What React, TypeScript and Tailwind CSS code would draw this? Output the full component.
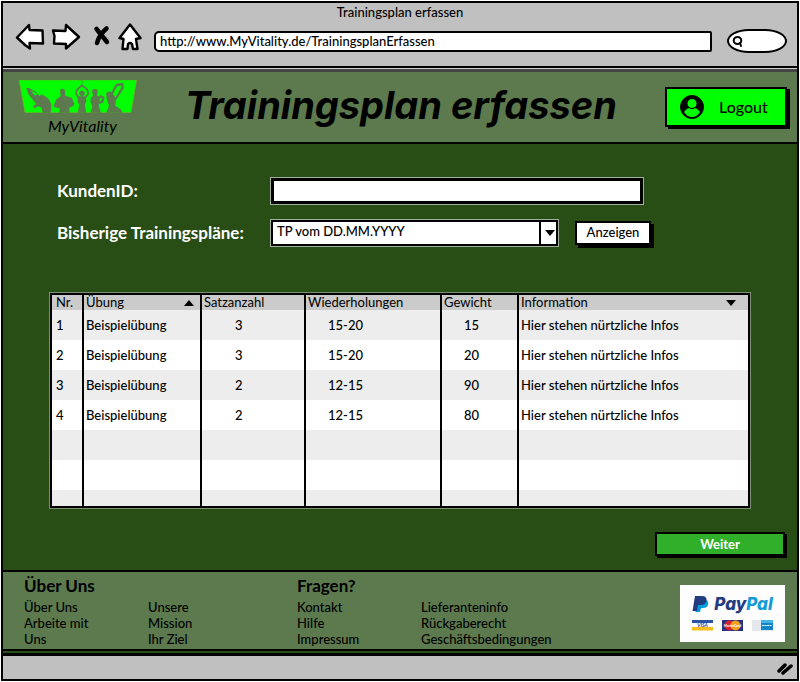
import React from "react";

const exercises = [
  { nr: 1, name: "Beispielübung", sets: "3", reps: "15-20", weight: "15", info: "Hier stehen nürtzliche Infos" },
  { nr: 2, name: "Beispielübung", sets: "3", reps: "15-20", weight: "20", info: "Hier stehen nürtzliche Infos" },
  { nr: 3, name: "Beispielübung", sets: "2", reps: "12-15", weight: "90", info: "Hier stehen nürtzliche Infos" },
  { nr: 4, name: "Beispielübung", sets: "2", reps: "12-15", weight: "80", info: "Hier stehen nürtzliche Infos" },
];

function BrowserBar() {
  return (
    <div className="border-b-2 border-black bg-[#c0c0c0] pb-[13px]">
      <p className="text-center text-[13px] leading-[18px]">Trainingsplan erfassen</p>
      <div className="flex items-center pr-[10px] pl-3">
        <div className="flex shrink-0 items-center">
          <button type="button" aria-label="Zurück" className="w-[30px]">
            <svg viewBox="0 0 30 28" className="h-7 w-[30px]" fill="#fff" stroke="#000" strokeWidth="2.4" strokeLinejoin="round">
              <path d="M2 14.500 L14 2 L14.500 7 L27.500 7.500 L28 20.500 L14.500 20 L15 25.500 L10 22 Z" />
            </svg>
          </button>
          <button type="button" aria-label="Vorwärts" className="ml-[6px] w-[30px]">
            <svg viewBox="0 0 30 28" className="h-7 w-[30px]" fill="#fff" stroke="#000" strokeWidth="2.4" strokeLinejoin="round">
              <path d="M2 7.500 L14.500 8 L15 2 L28 14 L15 25.500 L15 21 L3 20.500 L3.500 13 Z" />
            </svg>
          </button>
          <button type="button" aria-label="Abbrechen" className="ml-[11px] w-5">
            <svg viewBox="0 0 20 28" className="h-7 w-5" fill="none" stroke="#000" strokeWidth="4.500" strokeLinecap="round">
              <path d="M4.500 6 L15 19 M14.500 5.500 Q7 12 5 20" />
            </svg>
          </button>
          <button type="button" aria-label="Startseite" className="ml-[6px] w-6">
            <svg viewBox="0 0 24 28" className="h-7 w-6" fill="#fff" stroke="#000" strokeWidth="2.400" strokeLinejoin="round">
              <path d="M1.500 15 L12 1.500 L22.500 15 L18 16 L19.500 26 L15 26 L14 21 Q12 19 10 21 L9.500 26 L4.500 26 L5.500 16 Z" />
            </svg>
          </button>
        </div>
        <input
          aria-label="Adresse"
          defaultValue="http://www.MyVitality.de/TrainingsplanErfassen"
          className="mt-2 ml-3 h-[21px] min-w-0 flex-1 rounded-l-[5px] rounded-r-[2px] border-2 border-black bg-white pl-1 text-[13px] leading-4"
        />
        <label className="mt-2 ml-[15px] flex h-6 w-[60px] shrink-0 items-center rounded-[40%/55%] border-2 border-black bg-white pl-[3px]">
          <svg viewBox="0 0 12 12" className="size-3 shrink-0" fill="none" stroke="#000" strokeWidth="2" strokeLinecap="round">
            <ellipse cx="5.500" cy="5.500" rx="3.800" ry="3.500" />
            <path d="M8 8 L9 11" />
          </svg>
          <input aria-label="Suchen" className="w-8 bg-transparent text-xs outline-none" />
        </label>
      </div>
    </div>
  );
}

function Logo() {
  return (
    <div className="flex w-[118px] flex-col">
      <svg viewBox="14 19 354 99" className="h-[33px] w-[118px]" aria-hidden="true">
        <path d="M14 19 H367 L350 117 H32 Z" fill="#00ff00" stroke="#7da52f" strokeWidth="2" />
        <g fill="#5c7a4d">
          <path d="M36 43 L45 43 L66 56 L76 68 L81 62 L90 66 L104 77 L111 92 L110 117 H85 L82 103 L72 98 L60 104 L56 97 L66 91 L60 84 L42 62 Z" />
          <path d="M137 50 Q140 43 149 46 Q154 50 152 61 L153 66 L172 72 L180 90 L178 96 L164 103 L166 117 H134 L137 104 L120 101 L118 96 L126 77 L139 68 Z" />
          <circle cx="203" cy="59" r="8" />
          <path d="M192 68 L214 68 L216 82 L211 94 L216 117 H190 L195 95 L189 82 Z" />
          <path d="M192 72 L185 60 L188 48 L202 35 L218 46 L222 59 L214 72" fill="none" stroke="#5c7a4d" strokeWidth="5" />
          <path d="M203 19 V37" stroke="#5c7a4d" strokeWidth="2" />
          <path d="M233 50 Q242 42 250 50 L248 64 L257 76 L253 95 L260 117 H229 L234 98 L228 84 L230 73 L236 66 Z" />
          <path d="M247 90 L264 84 L267 73 L260 68 L252 73" fill="none" stroke="#5c7a4d" strokeWidth="7" strokeLinejoin="round" />
          <path d="M275 60 Q279 51 289 54 L298 63 L305 75 L303 96 L318 106 L325 117 H276 L284 96 L278 80 Z" />
          <path d="M292 61 L307 34 L324 31 L325 42 L304 76" fill="none" stroke="#5c7a4d" strokeWidth="7" strokeLinejoin="round" />
        </g>
        <path d="M48 50 L70 61 L62 66 Z M308 40 L319 37 L301 65 L298 57 Z" fill="#00ff00" />
      </svg>
      <span className="ml-[9px] pt-[5px] text-center text-base leading-4 font-normal italic">MyVitality</span>
    </div>
  );
}

function Header() {
  return (
    <header className="flex items-center justify-between border-t-[3px] border-b-2 border-t-[#444444] border-b-black bg-[#5c7a4d] py-1 pr-[10px] pl-4">
      <Logo />
      <h1 className="pb-1 font-[Inter,'Noto_Sans',sans-serif] text-[38px] leading-[58px] font-bold italic">Trainingsplan erfassen</h1>
      <button
        type="button"
        className="flex h-10 w-[122px] items-center gap-[14px] border-2 border-black bg-[#00ff00] pl-3 shadow-[3px_2px_0_#000]"
      >
        <svg viewBox="0 0 26 26" className="size-[26px]" aria-hidden="true">
          <circle cx="13" cy="13" r="11.500" fill="#000" stroke="#000" />
          <path d="M5 18 Q8 14 10.500 14 Q13 16 15.500 14 Q18 14 21 18 Q18 23 13 23 Q8 23 5 18 Z" fill="#00ff00" />
          <circle cx="13" cy="9.500" r="5" fill="#00ff00" stroke="#000" />
        </svg>
        <span className="text-base">Logout</span>
      </button>
    </header>
  );
}

function PlanForm() {
  return (
    <form className="grid grid-cols-[214px_1fr] gap-y-4 pt-[34px] pl-[54px]" onSubmit={(e) => e.preventDefault()}>
      <label htmlFor="kunde" className="self-center text-[17px] leading-6 font-bold text-white">
        KundenID:
      </label>
      <input id="kunde" className="h-[26px] w-[372px] border-[3px] border-black bg-white px-1 text-[13px] outline outline-[#a4aea0]" />
      <label htmlFor="plan" className="self-center text-[17px] leading-6 font-bold text-white">
        Bisherige Trainingspläne:
      </label>
      <div className="flex items-center gap-[17px]">
        <div className="relative">
          <select
            id="plan"
            className="block h-[26px] w-[287px] appearance-none border-2 border-black bg-white px-1 pb-1 text-[13px] outline outline-[#a4aea0]"
          >
            <option>TP vom DD.MM.YYYY</option>
          </select>
          <span className="pointer-events-none absolute inset-y-0 right-0 flex w-[19px] items-center justify-center border-l-2 border-black">
            <svg viewBox="0 0 10 6" className="h-[6px] w-[10px]" aria-hidden="true">
              <path d="M0 0 H10 L5 6 Z" />
            </svg>
          </span>
        </div>
        <button type="button" className="h-6 w-[76px] border-2 border-black bg-white pb-[2px] text-[13px] leading-4 shadow-[3px_3px_0_#000]">
          Anzeigen
        </button>
      </div>
    </form>
  );
}

function PlanTable() {
  const head = "border-x-2 border-black px-[2px] text-left font-normal";
  const cell = "border-x-2 border-black";
  return (
    <div className="mx-[47px] mt-[47px] border-2 border-black outline outline-[#7d8f74]">
      <table className="w-full table-fixed border-collapse border-hidden text-[13px] leading-4">
        <colgroup>
          <col className="w-[31px]" />
          <col className="w-[118px]" />
          <col className="w-[104px]" />
          <col className="w-[136px]" />
          <col className="w-[77px]" />
          <col />
        </colgroup>
        <thead>
          <tr className="h-[15px] bg-[#cbcbcb] leading-[15px]">
            <th className={head}>
              <span className="pl-[2px]">Nr.</span>
            </th>
            <th className={head}>
              <span className="flex items-center justify-between pr-1">
                Übung
                <svg viewBox="0 0 10 6" className="h-[6px] w-[10px]" aria-hidden="true">
                  <path d="M0 6 H10 L5 0 Z" />
                </svg>
              </span>
            </th>
            <th className={head}>Satzanzahl</th>
            <th className={head}>Wiederholungen</th>
            <th className={head}>Gewicht</th>
            <th className={head}>
              <span className="flex items-center justify-between pr-[10px]">
                Information
                <svg viewBox="0 0 10 6" className="h-[6px] w-[10px]" aria-hidden="true">
                  <path d="M0 0 H10 L5 6 Z" />
                </svg>
              </span>
            </th>
          </tr>
        </thead>
        <tbody>
          {exercises.map((e) => (
            <tr key={e.nr} className="h-[30px] odd:bg-[#ededed] even:bg-white">
              <td className="border-x-2 border-black pl-1">{e.nr}</td>
              <td className="border-x-2 border-black pl-[2px]">{e.name}</td>
              <td className="border-x-2 border-black pl-[33px]">{e.sets}</td>
              <td className="border-x-2 border-black pl-[22px]">{e.reps}</td>
              <td className="border-x-2 border-black pl-[22px]">{e.weight}</td>
              <td className="border-x-2 border-black pl-[2px]">{e.info}</td>
            </tr>
          ))}
          {["h-[30px] bg-[#ededed]", "h-[30px] bg-white", "h-4 bg-[#ededed]"].map((row) => (
            <tr key={row} className={row}>
              <td className={cell} />
              <td className={cell} />
              <td className={cell} />
              <td className={cell} />
              <td className={cell} />
              <td className={cell} />
            </tr>
          ))}
        </tbody>
      </table>
    </div>
  );
}

function PayPalBadge() {
  return (
    <div className="flex h-[57px] w-[105px] shrink-0 flex-col items-center gap-[7px] bg-[#fdfdfe] pt-[10px]">
      <div className="flex items-center gap-[5px]">
        <svg viewBox="0 0 17 18" className="h-[18px] w-[17px]" aria-hidden="true">
          <path d="M5 5 H14 Q17 6 16 10 Q15 13 11 13 H9 L8 17 H3.500 Z" fill="#009cde" />
          <path d="M3 1 H10 Q15 1 14.500 5.500 Q13.500 10 8.500 10 H6 L5 16 H0.500 Z" fill="#253b80" />
        </svg>
        <span className="font-[Inter,'Noto_Sans',sans-serif] text-[17px] leading-[18px] font-extrabold italic">
          <span className="text-[#253b80]">Pay</span>
          <span className="text-[#179bd7]">Pal</span>
        </span>
      </div>
      <div className="flex gap-[9px]">
        <svg viewBox="0 0 21 11" className="h-[11px] w-[21px]" role="img" aria-label="Visa">
          <rect width="21" height="11" fill="#fff" />
          <rect width="21" height="3" fill="#2a52a5" />
          <rect y="7" width="21" height="3.500" fill="#f2bd1d" />
          <text x="10.500" y="7" textAnchor="middle" fontSize="5" fontWeight="bold" fontStyle="italic" fill="#20408e">VISA</text>
        </svg>
        <svg viewBox="0 0 21 11" className="h-[11px] w-[21px]" role="img" aria-label="MasterCard">
          <rect width="21" height="11" fill="#29317e" />
          <circle cx="7.500" cy="5.500" r="5" fill="#dc1f2c" />
          <circle cx="13.500" cy="5.500" r="5" fill="#f5a01d" />
          <text x="10.500" y="7" textAnchor="middle" fontSize="3.500" fontWeight="bold" fontStyle="italic" fill="#fff">MasterCard</text>
        </svg>
        <svg viewBox="0 0 21 11" className="h-[11px] w-[21px]" role="img" aria-label="American Express">
          <rect width="21" height="11" fill="#e4e8ec" />
          <rect x="9" width="12" height="10" fill="#1285c9" />
          <path d="M9 0 H21 V3 H9 Z" fill="#46b5e6" />
          <path d="M10 5.500 H20" stroke="#fff" strokeDasharray="2 0.500" />
        </svg>
      </div>
    </div>
  );
}

function Footer() {
  return (
    <footer className="flex items-start justify-between border-y-2 border-black bg-[#5c7a4d] pr-3 pl-[21px]">
      <div className="flex pt-[5px] pb-[2px] text-[13px] leading-4">
        <section className="w-[273px]">
          <h2 className="text-[17px] leading-[18px] font-bold">Über Uns</h2>
          <div className="flex pt-1">
            <div className="flex w-[124px] flex-col">
              <a href="#ueber">Über Uns</a>
              <a href="#arbeit" className="w-20">Arbeite mit Uns</a>
            </div>
            <div className="flex flex-col">
              <a href="#mission" className="w-12">Unsere Mission</a>
              <a href="#ziel">Ihr Ziel</a>
            </div>
          </div>
        </section>
        <section>
          <h2 className="text-[17px] leading-[18px] font-bold">Fragen?</h2>
          <div className="flex pt-1">
            <div className="flex w-[124px] flex-col">
              <a href="#kontakt">Kontakt</a>
              <a href="#hilfe">Hilfe</a>
              <a href="#impressum">Impressum</a>
            </div>
            <div className="flex flex-col">
              <a href="#lieferanten">Lieferanteninfo</a>
              <a href="#rueckgabe">Rückgaberecht</a>
              <a href="#agb">Geschäftsbedingungen</a>
            </div>
          </div>
        </section>
      </div>
      <div className="pt-[13px]">
        <PayPalBadge />
      </div>
    </footer>
  );
}

export default function App() {
  return (
    <div className="bg-white p-[1px] font-[Lato,'Noto_Sans',sans-serif] font-medium text-black">
      <div className="border-2 border-black">
        <BrowserBar />
        <div className="h-[1px] bg-[#d4d4d4]" />
        <Header />
        <main className="bg-[#284d15]">
          <PlanForm />
          <PlanTable />
          <div className="flex justify-end pt-6 pr-3 pb-[14px]">
            <button
              type="button"
              className="h-6 w-[130px] border-2 border-black bg-[#30b02a] text-[13px] leading-4 font-bold text-white shadow-[2px_2px_0_#000]"
            >
              Weiter
            </button>
          </div>
        </main>
        <Footer />
        <div className="border-b-[3px] border-black bg-[#284d15] pt-[2px]" />
        <div className="flex h-[23px] items-center justify-end bg-[#c0c0c0] pr-1">
          <svg viewBox="0 0 16 14" className="h-[14px] w-4" fill="none" stroke="#000" strokeWidth="3.500" strokeLinecap="round" aria-hidden="true">
            <path d="M2 10 L8 4 M6 12 L14 5" />
          </svg>
        </div>
      </div>
    </div>
  );
}
